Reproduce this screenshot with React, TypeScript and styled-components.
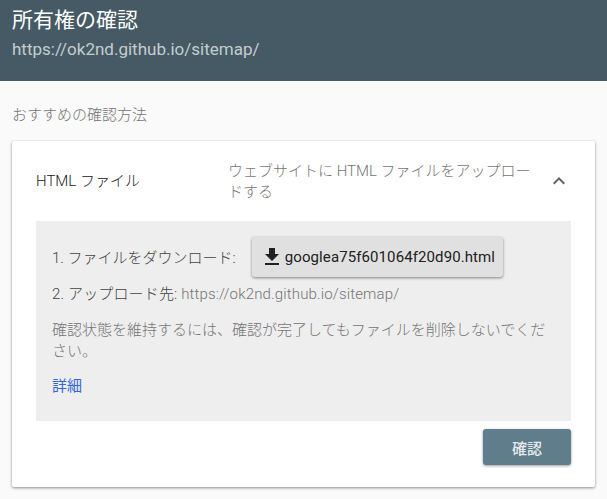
import React from "react"
import styled, { createGlobalStyle } from "styled-components"

const Global = createGlobalStyle`
  html, body {
    margin: 0;
    padding: 0;
    background: #fafafa;
    font-family: Roboto, "Noto Sans CJK JP", sans-serif;
  }
`

const Page = styled.div`
  width: 607px;
  height: 499px;
  overflow: hidden;
`

const Header = styled.header`
  height: 81px;
  box-sizing: border-box;
  background: #455a64;
  padding: 5px 12px 0;
`

const Title = styled.h1`
  margin: 0;
  font-size: 21px;
  line-height: 30px;
  font-weight: 400;
  color: #fff;
`

const Url = styled.div`
  margin-top: 2px;
  font-size: 17px;
  line-height: 24px;
  color: rgba(255, 255, 255, 0.7);
`

const Section = styled.main`
  padding: 0 12px;
`

const SectionLabel = styled.div`
  padding-top: 24px;
  height: 60px;
  box-sizing: border-box;
  font-size: 15px;
  font-weight: 300;
  line-height: 20px;
  color: #757575;
`

const Card = styled.div`
  background: #fff;
  border-radius: 2px;
  box-shadow: 0 1px 3px rgba(0, 0, 0, 0.45);
  padding: 0 24px 0;
  height: 346px;
  box-sizing: border-box;
`

const CardHead = styled.div`
  display: grid;
  grid-template-columns: 192px 1fr 24px;
  align-items: center;
  height: 80px;
`

const MethodName = styled.div`
  margin-top: -3px;
  font-size: 15px;
  font-weight: 300;
  color: #212121;
`

const MethodHint = styled.div`
  width: 310px;
  margin-top: 1px;
  font-size: 15px;
  font-weight: 300;
  line-height: 21px;
  color: #757575;
`

const Toggle = styled.span`
  display: flex;
  justify-content: center;
  color: #616161;
`

const Panel = styled.div`
  height: 200px;
  box-sizing: border-box;
  background: #eeeeee;
  padding: 16px;
`

const StepRow = styled.div`
  display: flex;
  align-items: center;
  gap: 16px;
  font-size: 15px;
  font-weight: 300;
  color: #424242;
`

const StepLabel = styled.span`
  margin-top: -2px;
`

const StepUrl = styled.span`
  color: #757575;
`

const DownloadButton = styled.button`
  display: inline-flex;
  align-items: center;
  gap: 1px;
  height: 40px;
  padding: 0 8px 0 8px;
  border: none;
  border-radius: 3px;
  background: #e0e0e0;
  box-shadow: 0 1px 3px rgba(0, 0, 0, 0.45);
  font-family: inherit;
  font-size: 15px;
  letter-spacing: 0.1px;
  color: #212121;
`

const UploadRow = styled.div`
  margin-top: 7px;
  font-size: 15px;
  font-weight: 300;
  line-height: 21px;
  letter-spacing: 0.15px;
  color: #424242;
`

const Notice = styled.p`
  margin: 15px 0 0;
  font-size: 15px;
  font-weight: 300;
  line-height: 21px;
  color: #757575;
`

const DetailLink = styled.a`
  display: block;
  margin-top: 14px;
  font-size: 15px;
  line-height: 21px;
  color: #3367d6;
`

const Actions = styled.div`
  display: flex;
  justify-content: flex-end;
  padding-top: 8px;
`

const ConfirmButton = styled.button`
  width: 88px;
  height: 36px;
  border: none;
  border-radius: 3px;
  background: #607d8b;
  box-shadow: 0 1px 3px rgba(0, 0, 0, 0.4);
  font-family: inherit;
  font-size: 15px;
  font-weight: 500;
  color: rgba(255, 255, 255, 0.87);
`

const App: React.FC = () => {
  return (
    <Page>
      <Global />
      <Header>
        <Title>所有権の確認</Title>
        <Url>https://ok2nd.github.io/sitemap/</Url>
      </Header>
      <Section>
        <SectionLabel>おすすめの確認方法</SectionLabel>
        <Card>
          <CardHead>
            <MethodName>HTML ファイル</MethodName>
            <MethodHint>ウェブサイトに HTML ファイルをアップロードする</MethodHint>
            <Toggle>
              <svg width="24" height="24" viewBox="0 0 24 24" fill="currentColor">
                <path d="M7.41 15.41 12 10.83l4.59 4.58L18 14l-6-6-6 6z" />
              </svg>
            </Toggle>
          </CardHead>
          <Panel>
            <StepRow>
              <StepLabel>1. ファイルをダウンロード:</StepLabel>
              <DownloadButton>
                <svg width="24" height="24" viewBox="0 0 24 24" fill="currentColor">
                  <path d="M19 9h-4V3H9v6H5l7 7 7-7zM5 18v2h14v-2H5z" />
                </svg>
                googlea75f601064f20d90.html
              </DownloadButton>
            </StepRow>
            <UploadRow>
              2. アップロード先: <StepUrl>https://ok2nd.github.io/sitemap/</StepUrl>
            </UploadRow>
            <Notice>確認状態を維持するには、確認が完了してもファイルを削除しないでください。</Notice>
            <DetailLink>詳細</DetailLink>
          </Panel>
          <Actions>
            <ConfirmButton>確認</ConfirmButton>
          </Actions>
        </Card>
      </Section>
    </Page>
  )
}

export default App
